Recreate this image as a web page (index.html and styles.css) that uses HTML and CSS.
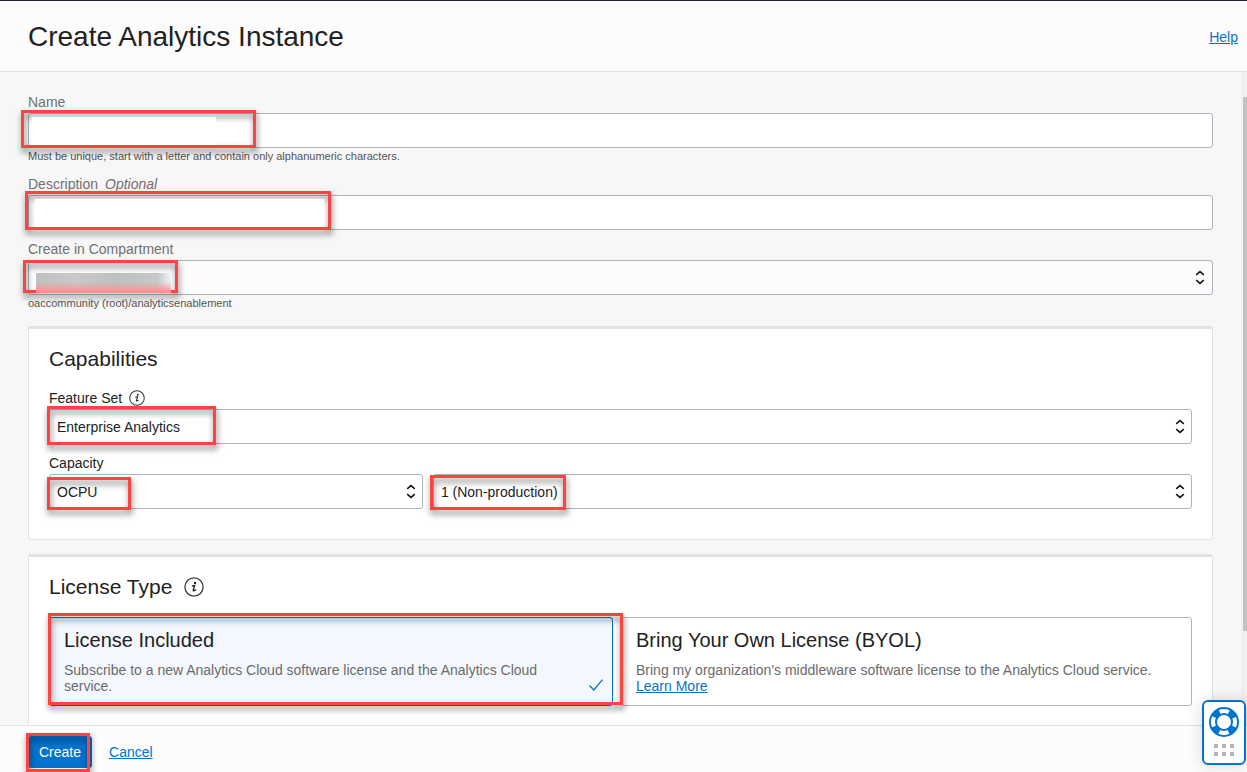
FILE: index.html
```html
<!DOCTYPE html>
<html lang="en">
<head>
<meta charset="utf-8">
<title>Create Analytics Instance</title>
<link rel="stylesheet" href="styles.css">
</head>
<body>
<svg class="sprite" aria-hidden="true">
  <symbol id="sort" viewBox="0 0 10 15"><path d="M1.2 4.8 5 1.6 8.8 4.8M1.2 10.2 5 13.4 8.8 10.2" fill="none" stroke="#161616" stroke-width="1.6"/></symbol>
  <symbol id="info" viewBox="0 0 20 20">
    <circle cx="10" cy="10" r="9.1" fill="none" stroke="#3a3a3a" stroke-width="1.3"/>
    <circle cx="11" cy="5.9" r="1.2" fill="#222"/>
    <path d="M7.8 9.2 10.7 8.5 9.2 13.2Q9 14.6 12 12.6" fill="none" stroke="#222" stroke-width="1.3"/>
  </symbol>
</svg>
<form class="dialog">
  <header class="header">
    <h1 class="title">Create Analytics Instance</h1>
    <a class="link" href="#">Help</a>
  </header>

  <div class="body">
    <main class="content">
      <div class="field">
        <label class="label label-muted" for="name">Name</label>
        <div class="control">
          <input class="input" id="name" type="text">
          <span class="mark mark-name"></span><span class="mask mask-name"></span>
        </div>
        <p class="hint">Must be unique, start with a letter and contain only alphanumeric characters.</p>
      </div>
      <div class="field">
        <label class="label label-muted" for="description">Description <em class="optional">Optional</em></label>
        <div class="control">
          <input class="input" id="description" type="text">
          <span class="mark mark-description"></span><span class="mask mask-description"></span>
        </div>
      </div>
      <div class="field">
        <label class="label label-muted" for="compartment">Create in Compartment</label>
        <div class="control">
          <select class="input input-soft" id="compartment"><option></option></select>
          <svg class="sort"><use href="#sort"/></svg>
          <span class="mark mark-compartment"></span><span class="redaction"></span>
        </div>
        <p class="hint">oaccommunity (root)/analyticsenablement</p>
      </div>

      <section class="card card-capabilities">
        <h2 class="card-title">Capabilities</h2>
        <div class="field">
          <label class="label" for="feature">Feature Set <svg class="info"><use href="#info"/></svg></label>
          <div class="control">
            <select class="input" id="feature"><option>Enterprise Analytics</option></select>
            <svg class="sort"><use href="#sort"/></svg>
            <span class="mark mark-feature"></span>
          </div>
        </div>
        <div class="field">
          <label class="label" for="capacity">Capacity</label>
          <div class="capacity">
            <div class="control">
              <select class="input" id="capacity"><option>OCPU</option></select>
              <svg class="sort"><use href="#sort"/></svg>
              <span class="mark mark-capacity"></span>
            </div>
            <div class="control">
              <select class="input" aria-label="Capacity size"><option>1 (Non-production)</option></select>
              <svg class="sort"><use href="#sort"/></svg>
              <span class="mark mark-size"></span>
            </div>
          </div>
        </div>
      </section>

      <section class="card">
        <h2 class="card-title">License Type <svg class="info info-large"><use href="#info"/></svg></h2>
        <div class="choices">
          <label class="choice choice-selected">
            <input class="choice-radio" type="radio" name="license" checked>
            <span class="choice-text">
              <span class="choice-title">License Included</span>
              <span class="choice-note">Subscribe to a new Analytics Cloud software license and the Analytics Cloud service.</span>
            </span>
            <svg class="check" viewBox="0 0 16 14"><path d="M1.5 6.5 5.8 11 14.5 .7" fill="none" stroke="#0572ce" stroke-width="1.3"/></svg>
            <span class="mark mark-license"></span>
          </label>
          <label class="choice">
            <input class="choice-radio" type="radio" name="license">
            <span class="choice-text">
              <span class="choice-title">Bring Your Own License (BYOL)</span>
              <span class="choice-note">Bring my organization's middleware software license to the Analytics Cloud service. <a class="link" href="#">Learn More</a></span>
            </span>
          </label>
        </div>
      </section>
    </main>
    <div class="scroll-track"><div class="scroll-thumb"></div></div>
  </div>

  <footer class="footer">
    <div class="control">
      <button class="button" type="button">Create</button>
      <span class="mark mark-create"></span>
    </div>
    <a class="link" href="#">Cancel</a>
  </footer>
</form>

<button class="support" type="button" aria-label="Support">
  <svg class="support-ring" viewBox="0 0 30 30">
    <circle cx="15" cy="15" r="10.7" fill="none" stroke="#0572ce" stroke-width="7" stroke-dasharray="7.6 9.207" stroke-dashoffset="-4.6"/>
    <circle cx="15" cy="15" r="14" fill="none" stroke="#0572ce" stroke-width="2"/>
    <circle cx="15" cy="15" r="8" fill="none" stroke="#0572ce" stroke-width="2"/>
  </svg>
  <svg class="support-dots" viewBox="0 0 20 12" fill="#b1b5bb"><path d="M0 0h4v4H0zM8 0h4v4H8zM16 0h4v4h-4zM0 8h4v4H0zM8 8h4v4H8zM16 8h4v4h-4z"/></svg>
</button>
</body>
</html>
```

FILE: styles.css
```css
* { box-sizing: border-box; }

body {
  margin: 0;
  font: 14px/16px "Liberation Sans", Arial, sans-serif;
  color: #222;
  background: #f7f7f7;
}

h1, h2, p { margin: 0; font-weight: 400; }

.sprite { position: absolute; width: 0; height: 0; }

.dialog {
  display: flex;
  flex-direction: column;
  height: 100vh;
}

.header {
  display: flex;
  flex: none;
  align-items: center;
  justify-content: space-between;
  padding: 19px 9px 18px 28px;
  border-top: 1px solid #1b2432;
  border-bottom: 1px solid #e3e3e3;
  background: #fcfcfc;
}

.title { font-size: 28px; line-height: 33px; }

.link { color: #0572ce; text-decoration: underline; }

.body { display: flex; flex: 1; min-height: 0; }

.content {
  flex: 1;
  min-width: 0;
  padding: 22px 28px 0;
  overflow: hidden;
}

.scroll-track {
  flex: none;
  width: 6px;
  padding: 25px 0 94px 2px;
  background: #f0f0f0;
}

.scroll-thumb { height: 100%; background: #c1c1c1; }

.field + .field { margin-top: 11px; }

.label {
  display: flex;
  align-items: center;
  gap: 7px;
  height: 16px;
  margin-bottom: 3px;
}

.label-muted { color: #707070; }

.control { position: relative; }

.input {
  display: block;
  width: 100%;
  height: 35px;
  padding: 0 7px;
  border: 1px solid #aeb4be;
  border-radius: 3px;
  background: #fff;
  color: inherit;
  font: inherit;
  appearance: none;
}

.input-soft { background: #fcfcfc; }

.sort {
  position: absolute;
  top: 10px;
  right: 7px;
  width: 10px;
  height: 15px;
  pointer-events: none;
}

.control .input-soft + .sort { right: 8px; }

.hint { font-size: 11px; line-height: 17px; color: #555; }

.info { flex: none; width: 16px; height: 16px; }
.info-large { width: 20px; height: 20px; }

.card {
  margin-top: 14px;
  padding: 18px 20px 30px;
  border: 1px solid #e1e2e6;
  border-top-width: 3px;
  border-radius: 3px;
  background: #fff;
}

.card-title {
  display: flex;
  align-items: center;
  gap: 12px;
  margin-bottom: 18px;
  font-size: 21px;
  line-height: 24px;
}

.card-capabilities .card-title { margin-bottom: 19px; }

.capacity { display: grid; grid-template-columns: 33fr 67fr; gap: 10px; }

.choices { display: grid; grid-template-columns: 564fr 571fr; gap: 8px; }

.choice {
  position: relative;
  display: flex;
  align-items: flex-end;
  padding: 10px 8px 11px 14px;
  border: 1px solid #aeb4be;
  border-radius: 3px;
}

.choice-selected { border-color: #0572ce; background: #f4f8fe; }

.choice-radio { position: absolute; opacity: 0; pointer-events: none; }

.choice-text { flex: 1; align-self: flex-start; }

.choice-title { display: block; font-size: 20px; line-height: 24px; }

.choice-note { display: block; margin-top: 10px; color: #6b6b6b; }

.check { flex: none; width: 16px; height: 14px; margin-bottom: 1px; }

.footer {
  display: flex;
  flex: none;
  align-items: center;
  gap: 17px;
  padding: 10px 28px 4px;
  border-top: 1px solid #e3e3e3;
  background: #fcfcfc;
}

.button {
  display: block;
  height: 32px;
  padding: 0 11px;
  border: 0;
  border-radius: 3px;
  background: #0572ce;
  color: #fff;
  font: inherit;
}

/* Highlight frames drawn over the controls */
.mark {
  position: absolute;
  z-index: 1;
  border: 3px solid #ff4343;
  filter: drop-shadow(1px 4px 3px rgba(0, 0, 0, .55));
  pointer-events: none;
}

.mark-name { left: -7px; top: -3px; width: 235px; height: 38px; }
.mark-description { left: -3px; top: -4px; width: 306px; height: 39px; }
.mark-compartment { left: -5px; top: 0; width: 155px; height: 33px; }
.mark-feature { left: -2px; top: -3px; width: 169px; height: 39px; }
.mark-capacity { left: -2px; top: 3px; width: 84px; height: 33px; }
.mark-size { left: -3px; top: 1px; width: 136px; height: 35px; }
.mark-license { left: -2px; top: -5px; width: 575px; height: 92px; }
.mark-create { left: -2px; top: -3px; width: 64px; height: 39px; }

.mask, .redaction { position: absolute; z-index: 2; pointer-events: none; }
.mask { background: #fff; }
.mask-name { left: 4px; top: 4px; width: 184px; height: 28px; }
.mask-description { left: 7px; top: 4px; width: 289px; height: 28px; }

.redaction {
  left: 8px;
  top: 13px;
  width: 135px;
  height: 20px;
  background:
    linear-gradient(to bottom, transparent 45%, #ff9090 95%),
    linear-gradient(to right, #bfc1c0, #c8c9c9 30%, #bdc0c0 60%, #c6c8c9 90%, #eef2f7);
}

.support {
  position: fixed;
  right: 1px;
  bottom: 7px;
  z-index: 3;
  display: flex;
  flex-direction: column;
  align-items: center;
  gap: 7px;
  padding: 5px;
  width: 44px;
  height: 65px;
  border: 2px solid #0572ce;
  border-radius: 6px;
  background: #fff;
  box-shadow: 0 0 16px rgba(0, 0, 0, .15);
}

.support-ring { flex: none; width: 30px; height: 30px; }
.support-dots { flex: none; width: 20px; height: 12px; }
```
